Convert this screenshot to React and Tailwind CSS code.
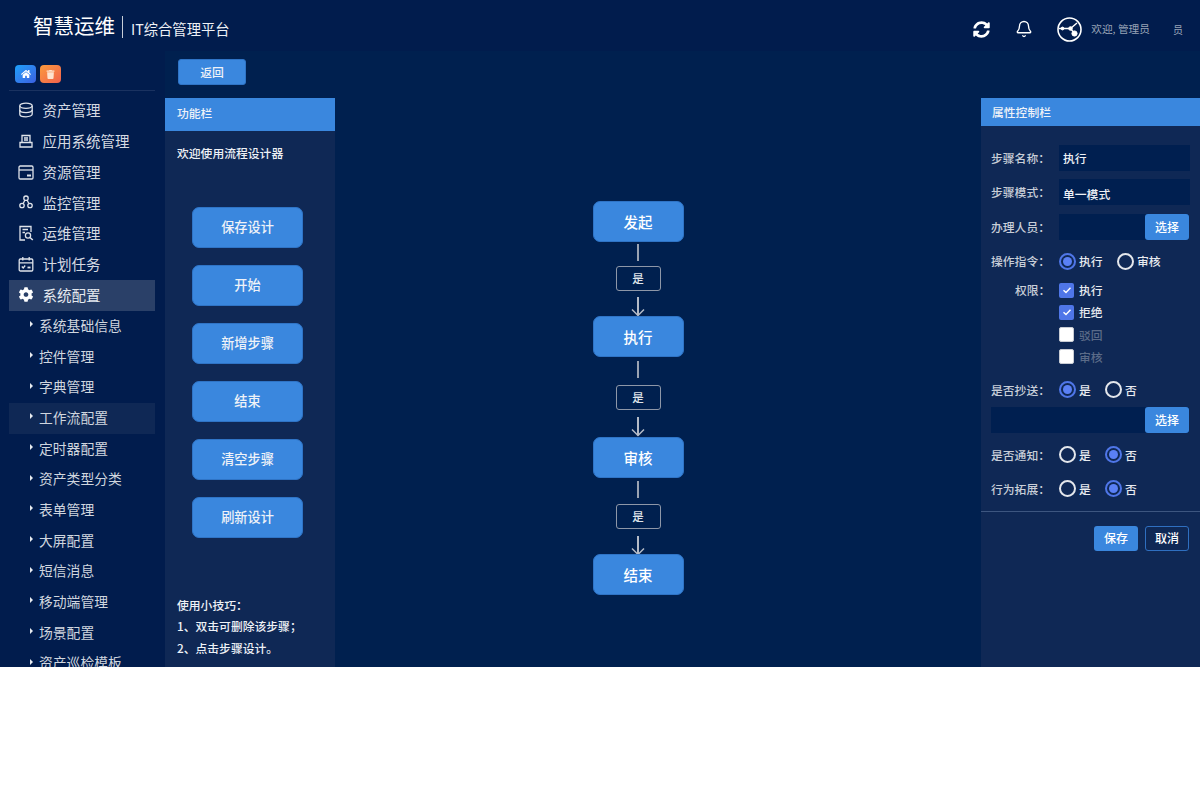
import React from "react";
import { FaSyncAlt, FaCog, FaHome, FaTrash } from "react-icons/fa";
import { Bell } from "lucide-react";

const font = { fontFamily: '"Noto Sans CJK SC", "Noto Sans", sans-serif' };

function Svg({ children }) {
  return (
    <svg width="16" height="16" viewBox="0 0 16 16" fill="none" stroke="#dfe3ea" strokeWidth="1.3" className="shrink-0">
      {children}
    </svg>
  );
}

const IconDb = () => (
  <Svg>
    <ellipse cx="8" cy="3.8" rx="6.2" ry="2.6" />
    <path d="M1.8 3.8V12.2C1.8 13.6 4.6 14.8 8 14.8S14.2 13.6 14.2 12.2V3.8" />
    <path d="M1.8 8C1.8 9.4 4.6 10.6 8 10.6S14.2 9.4 14.2 8" />
  </Svg>
);
const IconApp = () => (
  <Svg>
    <path d="M4 9V2.5H12V9" />
    <path d="M6 5H10M6 7H10" />
    <path d="M2 9.5H14V14H2Z" />
  </Svg>
);
const IconWallet = () => (
  <Svg>
    <rect x="1" y="2" width="14" height="13" rx="1.2" />
    <path d="M1 6H15" />
    <path d="M9 11.5H13" strokeWidth="2" />
  </Svg>
);
const IconNodes = () => (
  <Svg>
    <circle cx="8" cy="4.2" r="2.2" />
    <circle cx="4" cy="11.5" r="2.2" />
    <circle cx="12" cy="11.5" r="2.2" />
    <path d="M6.8 6.2L5.2 9.5M9.2 6.2L10.8 9.5" />
  </Svg>
);
const IconDocSearch = () => (
  <Svg>
    <path d="M7 15H2V1.5H13V7" />
    <path d="M4.5 4.5H10M4.5 7.5H7" />
    <circle cx="10" cy="10.5" r="2.6" />
    <path d="M12 12.5L14.8 15" strokeWidth="1.6" />
  </Svg>
);
const IconCal = () => (
  <Svg>
    <rect x="1.2" y="3" width="13.6" height="12" rx="1.2" />
    <path d="M1.2 6.8H14.8M4.8 1V4.5M11.2 1V4.5" />
    <path d="M3.8 10.5L5.2 12L7.2 9.5" />
    <path d="M9.5 11.5H12.5" strokeWidth="1.8" />
  </Svg>
);

const top = [
  ["资产管理", IconDb],
  ["应用系统管理", IconApp],
  ["资源管理", IconWallet],
  ["监控管理", IconNodes],
  ["运维管理", IconDocSearch],
  ["计划任务", IconCal],
];
const subs = ["系统基础信息", "控件管理", "字典管理", "工作流配置", "定时器配置", "资产类型分类", "表单管理", "大屏配置", "短信消息", "移动端管理", "场景配置", "资产巡检模板"];
const tools = ["保存设计", "开始", "新增步骤", "结束", "清空步骤", "刷新设计"];

function Sidebar() {
  return (
    <aside className="w-[165px] shrink-0 bg-[#011c4d] overflow-hidden pr-[10px]">
      <div className="h-[40px] ml-[9px] border-b border-[#1a3260] flex items-start gap-[4px] pl-[6px] pt-[14px]">
        <span className="w-[21px] h-[18px] rounded-[4px] bg-gradient-to-br from-[#18a0fb] to-[#3a5fe0] flex items-center justify-center"><FaHome className="text-white" size={10} /></span>
        <span className="w-[21px] h-[18px] rounded-[4px] bg-gradient-to-br from-[#fb9a3c] to-[#f0604c] flex items-center justify-center"><FaTrash className="text-[#fde3d0]" size={9} /></span>
      </div>
      <div className="pt-[5px] ml-[9px]">
        {top.map(([t, I]) => (
          <div key={t} className="h-[30.7px] pb-[2px] flex items-center pl-[9px] gap-[8.5px] text-[14.5px] text-[#d5dae2]">
            <I />
            <span>{t}</span>
          </div>
        ))}
        <div className="h-[30.7px] pb-[2px] flex items-center pl-[9px] gap-[8.5px] text-[14.5px] text-[#e4e8ee] bg-[#2a4068]">
          <FaCog size={15} className="text-white shrink-0 w-[16px]" />
          <span>系统配置</span>
        </div>
        {subs.map((t) => (
          <div key={t} className={`h-[30.7px] pb-[2px] flex items-center pl-[21px] gap-[6px] text-[13.8px] text-[#d0d6df] ${t === "工作流配置" ? "bg-[#0f2855]" : ""}`}>
            <span className="w-0 h-0 border-y-[3px] border-y-transparent border-l-[3px] border-l-[#e8ebf0] -mt-[2px]" />
            <span className="whitespace-nowrap">{t}</span>
          </div>
        ))}
      </div>
    </aside>
  );
}

function Node({ children }) {
  return <div className="w-[91px] h-[41px] rounded-[7px] bg-[#3a87de] border border-[#2f74c6] flex items-center justify-center text-[14.5px] font-medium text-white">{children}</div>;
}

function Connector({ mt, mid, arrow }) {
  return (
    <div className="flex flex-col items-center">
      <div className={`w-[2px] h-[17px] bg-[#9aa3b2] ${mt}`} />
      <div className={`w-[45px] h-[25px] border border-[#8e97a8] rounded-[3px] flex items-center justify-center text-[11.5px] font-medium text-[#dfe3ea] ${mid}`}>是</div>
      <svg width="16" height="20" viewBox="0 0 16 20" className={arrow} fill="none" stroke="#b4bbc7" strokeWidth="1.5">
        <path d="M8 0V18.5" strokeWidth="2" />
        <path d="M2 12.5L8 18.5L14 12.5" />
      </svg>
    </div>
  );
}

function Radio({ on, label }) {
  return (
    <span className="flex items-center gap-[3px]">
      {on ? (
        <span className="w-[17px] h-[17px] rounded-full border-2 border-[#4f76e8] flex items-center justify-center"><span className="w-[9px] h-[9px] rounded-full bg-[#5a80f5]" /></span>
      ) : (
        <span className="w-[17px] h-[17px] rounded-full border-2 border-[#e4e7ec]" />
      )}
      <span className="text-[11.8px] font-medium text-[#e8ebf0]">{label}</span>
    </span>
  );
}

function Check({ on, label }) {
  return (
    <div className="h-[22.2px] flex items-center gap-[5px]">
      {on ? (
        <span className="w-[15px] h-[15px] rounded-[2px] bg-[#4f76e8] flex items-center justify-center">
          <svg width="10" height="10" viewBox="0 0 10 10" fill="none" stroke="#fff" strokeWidth="1.4"><path d="M1.5 5.2L4 7.5L8.5 2.8" /></svg>
        </span>
      ) : (
        <span className="w-[15px] h-[15px] rounded-[2px] bg-white border border-[#c8ccd4]" />
      )}
      <span className={`text-[11.8px] font-medium ${on ? "text-[#e8ebf0]" : "text-[#5b6b88]"}`}>{label}</span>
    </div>
  );
}

function Label({ children }) {
  return <span className="w-[68px] shrink-0 text-[11.8px] font-medium text-[#c8ced8]">{children}</span>;
}

function SmallBtn({ children }) {
  return <button className="w-[44px] h-[26px] rounded-[3px] bg-[#3a87de] text-[12px] font-medium text-white flex items-center justify-center shrink-0">{children}</button>;
}

function RightPanel() {
  return (
    <section className="w-[219px] shrink-0 bg-[#0f2855] h-full">
      <div className="h-[28px] bg-[#3a87de] flex items-center pl-[11px] text-[11.8px] font-medium text-[#eef2f8]">属性控制栏</div>
      <div className="pl-[10px] pt-[19px] pr-[10px]">
        <div className="flex items-center h-[26px]">
          <Label>步骤名称：</Label>
          <div className="w-[131px] h-[26px] bg-[#001f50] pl-[4px] flex items-center text-[11.8px] font-medium text-[#eef1f6]">执行</div>
        </div>
        <div className="flex items-center h-[26px] mt-[8px]">
          <Label>步骤模式：</Label>
          <div className="w-[131px] h-[26px] bg-[#001f50] pl-[4px] pt-[4px] flex items-center text-[11.8px] font-medium text-[#eef1f6]">单一模式</div>
        </div>
        <div className="flex items-center h-[26px] mt-[9px]">
          <Label>办理人员：</Label>
          <div className="w-[130px] h-[26px] bg-[#001f50] flex justify-end"><SmallBtn>选择</SmallBtn></div>
        </div>
        <div className="flex items-center h-[20px] mt-[11px]">
          <Label>操作指令：</Label>
          <span className="w-[58px]"><Radio on label="执行" /></span>
          <Radio label="审核" />
        </div>
        <div className="flex mt-[8px]">
          <span className="w-[68px] shrink-0 text-[11.8px] font-medium text-[#c8ced8] pl-[24px] leading-[22px]">权限：</span>
          <div>
            <Check on label="执行" />
            <Check on label="拒绝" />
            <Check label="驳回" />
            <Check label="审核" />
          </div>
        </div>
        <div className="flex items-center h-[20px] mt-[12px]">
          <Label>是否抄送：</Label>
          <span className="w-[46px]"><Radio on label="是" /></span>
          <Radio label="否" />
        </div>
        <div className="w-[198px] h-[26px] bg-[#001f50] flex justify-end mt-[7px]"><SmallBtn>选择</SmallBtn></div>
        <div className="flex items-center h-[20px] mt-[12px]">
          <Label>是否通知：</Label>
          <span className="w-[46px]"><Radio label="是" /></span>
          <Radio on label="否" />
        </div>
        <div className="flex items-center h-[20px] mt-[14px]">
          <Label>行为拓展：</Label>
          <span className="w-[46px]"><Radio label="是" /></span>
          <Radio on label="否" />
        </div>
      </div>
      <div className="h-[1px] bg-[#3d5680] mt-[12px]" />
      <div className="flex justify-end gap-[7px] pr-[11px] mt-[14px]">
        <button className="w-[44px] h-[25px] rounded-[3px] bg-[#3a87de] text-[12px] font-medium text-white flex items-center justify-center">保存</button>
        <button className="w-[44px] h-[25px] rounded-[3px] border border-[#2f6fc0] text-[12px] font-medium text-white flex items-center justify-center">取消</button>
      </div>
    </section>
  );
}

export default function App() {
  return (
    <div className="h-[667px] w-full overflow-hidden flex flex-col bg-[#00204f]" style={font}>
      <header className="h-[51px] shrink-0 bg-[#011c4d] flex items-center pl-[33px] pr-[17px]">
        <span className="text-[20.5px] text-white -mt-[1px]">智慧运维</span>
        <span className="w-[1px] h-[22px] bg-[#c8ced8] ml-[7px] mr-[8px] mt-[3px]" />
        <span className="text-[14.3px] text-[#eef1f6] mt-[7px]">IT综合管理平台</span>
        <div className="ml-auto flex items-center mt-[7px]">
          <FaSyncAlt size={17} className="text-white" />
          <Bell size={18} strokeWidth={1.8} className="text-white ml-[25px]" />
          <svg width="25" height="25" viewBox="0 0 25 25" className="ml-[24px]" fill="none" stroke="#fff">
            <circle cx="12.5" cy="12.5" r="11.5" strokeWidth="1.6" />
            <path d="M2 11.5H13.5L20 6M13.5 11.5L18 17" strokeWidth="1.4" />
            <circle cx="5.5" cy="11.5" r="1.4" fill="#fff" />
            <circle cx="13.5" cy="11.5" r="1.8" fill="#fff" />
            <circle cx="17.5" cy="16.5" r="2.6" fill="#fff" />
          </svg>
          <span className="text-[10.7px] text-[#98a3b6] ml-[9px]">欢迎, 管理员</span>
          <span className="text-[10px] text-[#98a3b6] ml-[23px]">员</span>
        </div>
      </header>
      <div className="flex-1 flex min-h-0">
        <Sidebar />
        <main className="flex-1 min-w-0 flex flex-col">
          <div className="h-[47px] shrink-0 pl-[13px] pt-[8px]">
            <button className="w-[68px] h-[26px] rounded-[3px] bg-[#3a87de] border border-[#2f74c6] text-[11.8px] font-medium text-[#eef2f8] flex items-center justify-center">返回</button>
          </div>
          <div className="flex-1 min-h-0 flex">
            <section className="w-[170px] shrink-0 bg-[#0f2855] flex flex-col">
              <div className="h-[33px] pb-[3px] bg-[#3a87de] flex items-center pl-[12px] text-[11.8px] font-medium text-[#eef2f8]">功能栏</div>
              <p className="pl-[12px] mt-[13px] text-[11.8px] font-medium leading-[18px] text-[#eef1f6]">欢迎使用流程设计器</p>
              <div className="flex flex-col items-start pl-[27px] gap-[17px] mt-[45px]">
                {tools.map((t) => (
                  <button key={t} className="w-[111px] h-[41px] rounded-[7px] bg-[#3a87de] border border-[#2f74c6] text-[13.2px] font-medium text-[#eef2f8] flex items-center justify-center pb-[2px]">{t}</button>
                ))}
              </div>
              <div className="mt-auto pl-[12px] pb-[9px] text-[11.8px] font-medium leading-[21.5px] text-[#eef1f6]">
                <p>使用小技巧：</p>
                <p>1、双击可删除该步骤；</p>
                <p>2、点击步骤设计。</p>
              </div>
            </section>
            <div className="flex-1 min-w-0 flex flex-col items-center pt-[103px] pr-[40px]">
              <Node>发起</Node>
              <Connector mt="mt-[2px]" mid="mt-[5px]" arrow="mt-[6px] -mb-[1px]" />
              <Node>执行</Node>
              <Connector mt="mt-[4px]" mid="mt-[7px]" arrow="mt-[7px]" />
              <Node>审核</Node>
              <Connector mt="mt-[3px]" mid="mt-[6px]" arrow="mt-[7px] -mb-[2px]" />
              <Node>结束</Node>
            </div>
            <RightPanel />
          </div>
        </main>
      </div>
    </div>
  );
}
